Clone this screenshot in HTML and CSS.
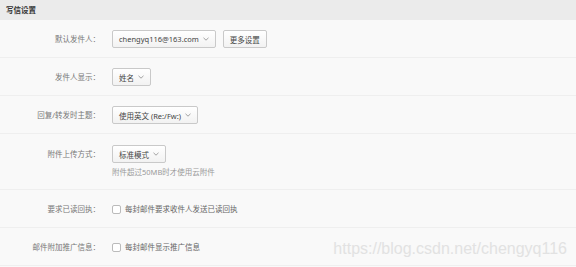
FILE: index.html
```html
<!DOCTYPE html>
<html lang="zh-CN">

<head>
  <meta charset="UTF-8">
  <title>写信设置</title>
  <link rel="stylesheet" href="styles.css">
</head>

<body>
  <div class="panel">
    <div class="panel-head">写信设置</div>

    <div class="row">
      <div class="label">默认发件人：</div>
      <div class="field">
        <button class="select">chengyq116@163.com <svg class="caret" viewBox="0 0 6 4"><path d="M0.5 0.8 L3 3.2 L5.5 0.8" /></svg></button>
        <button class="btn">更多设置</button>
      </div>
    </div>

    <div class="row">
      <div class="label">发件人显示：</div>
      <div class="field">
        <button class="select">姓名 <svg class="caret" viewBox="0 0 6 4"><path d="M0.5 0.8 L3 3.2 L5.5 0.8" /></svg></button>
      </div>
    </div>

    <div class="row">
      <div class="label">回复/转发时主题：</div>
      <div class="field">
        <button class="select">使用英文 (Re:/Fw:) <svg class="caret" viewBox="0 0 6 4"><path d="M0.5 0.8 L3 3.2 L5.5 0.8" /></svg></button>
      </div>
    </div>

    <div class="row row-tall">
      <div class="label">附件上传方式：</div>
      <div class="field field-stack">
        <button class="select">标准模式 <svg class="caret" viewBox="0 0 6 4"><path d="M0.5 0.8 L3 3.2 L5.5 0.8" /></svg></button>
        <div class="hint">附件超过50MB时才使用云附件</div>
      </div>
    </div>

    <div class="row">
      <div class="label">要求已读回执：</div>
      <div class="field">
        <label class="check"><span class="box"></span>每封邮件要求收件人发送已读回执</label>
      </div>
    </div>

    <div class="row">
      <div class="label">邮件附加推广信息：</div>
      <div class="field">
        <label class="check"><span class="box"></span>每封邮件显示推广信息</label>
      </div>
    </div>
  </div>

  <div class="watermark">https://blog.csdn.net/chengyq116</div>
</body>

</html>
```

FILE: styles.css
```css
* {
  margin: 0;
  padding: 0;
  box-sizing: border-box;
}

body {
  background: #f9f9f9;
  font-family: "Noto Sans", "Noto Sans CJK SC", sans-serif;
  font-size: 7.5px;
  color: #666;
  position: relative;
  overflow: hidden;
  height: 267px;
}

.panel-head {
  height: 20px;
  line-height: 20px;
  padding-left: 6px;
  background: #ebebeb;
  color: #333;
  font-weight: bold;
}

.row {
  display: grid;
  grid-template-columns: 100px 1fr;
  column-gap: 12px;
  padding: 10px 0 9px;
  border-bottom: 1px solid #efefef;
}

.row-tall {
  padding-top: 11px;
  padding-bottom: 11px;
}

.label {
  text-align: right;
  line-height: 18px;
  color: #777;
}

.field {
  display: flex;
  align-items: center;
  gap: 7px;
}

.field-stack {
  flex-direction: column;
  align-items: flex-start;
  gap: 3px;
}

.select,
.btn {
  height: 18px;
  padding: 0 6px;
  border: 1px solid #c9c9c9;
  border-radius: 2px;
  background: linear-gradient(#ffffff, #f2f2f2);
  color: #444;
  font-family: inherit;
  font-size: 7.5px;
  display: inline-flex;
  align-items: center;
  gap: 4px;
}

.caret {
  width: 6px;
  height: 4px;
  fill: none;
  stroke: #999;
  stroke-width: 0.9;
}

.hint {
  color: #999;
  line-height: 12px;
}

.check {
  display: flex;
  align-items: center;
  gap: 4px;
  line-height: 18px;
  color: #666;
}

.box {
  width: 9px;
  height: 9px;
  border: 1px solid #bbb;
  border-radius: 2px;
  background: #fff;
}

.watermark {
  position: absolute;
  right: 9px;
  bottom: 9px;
  font-family: "Liberation Sans", sans-serif;
  font-size: 16px;
  color: #e2e2e2;
}
```
